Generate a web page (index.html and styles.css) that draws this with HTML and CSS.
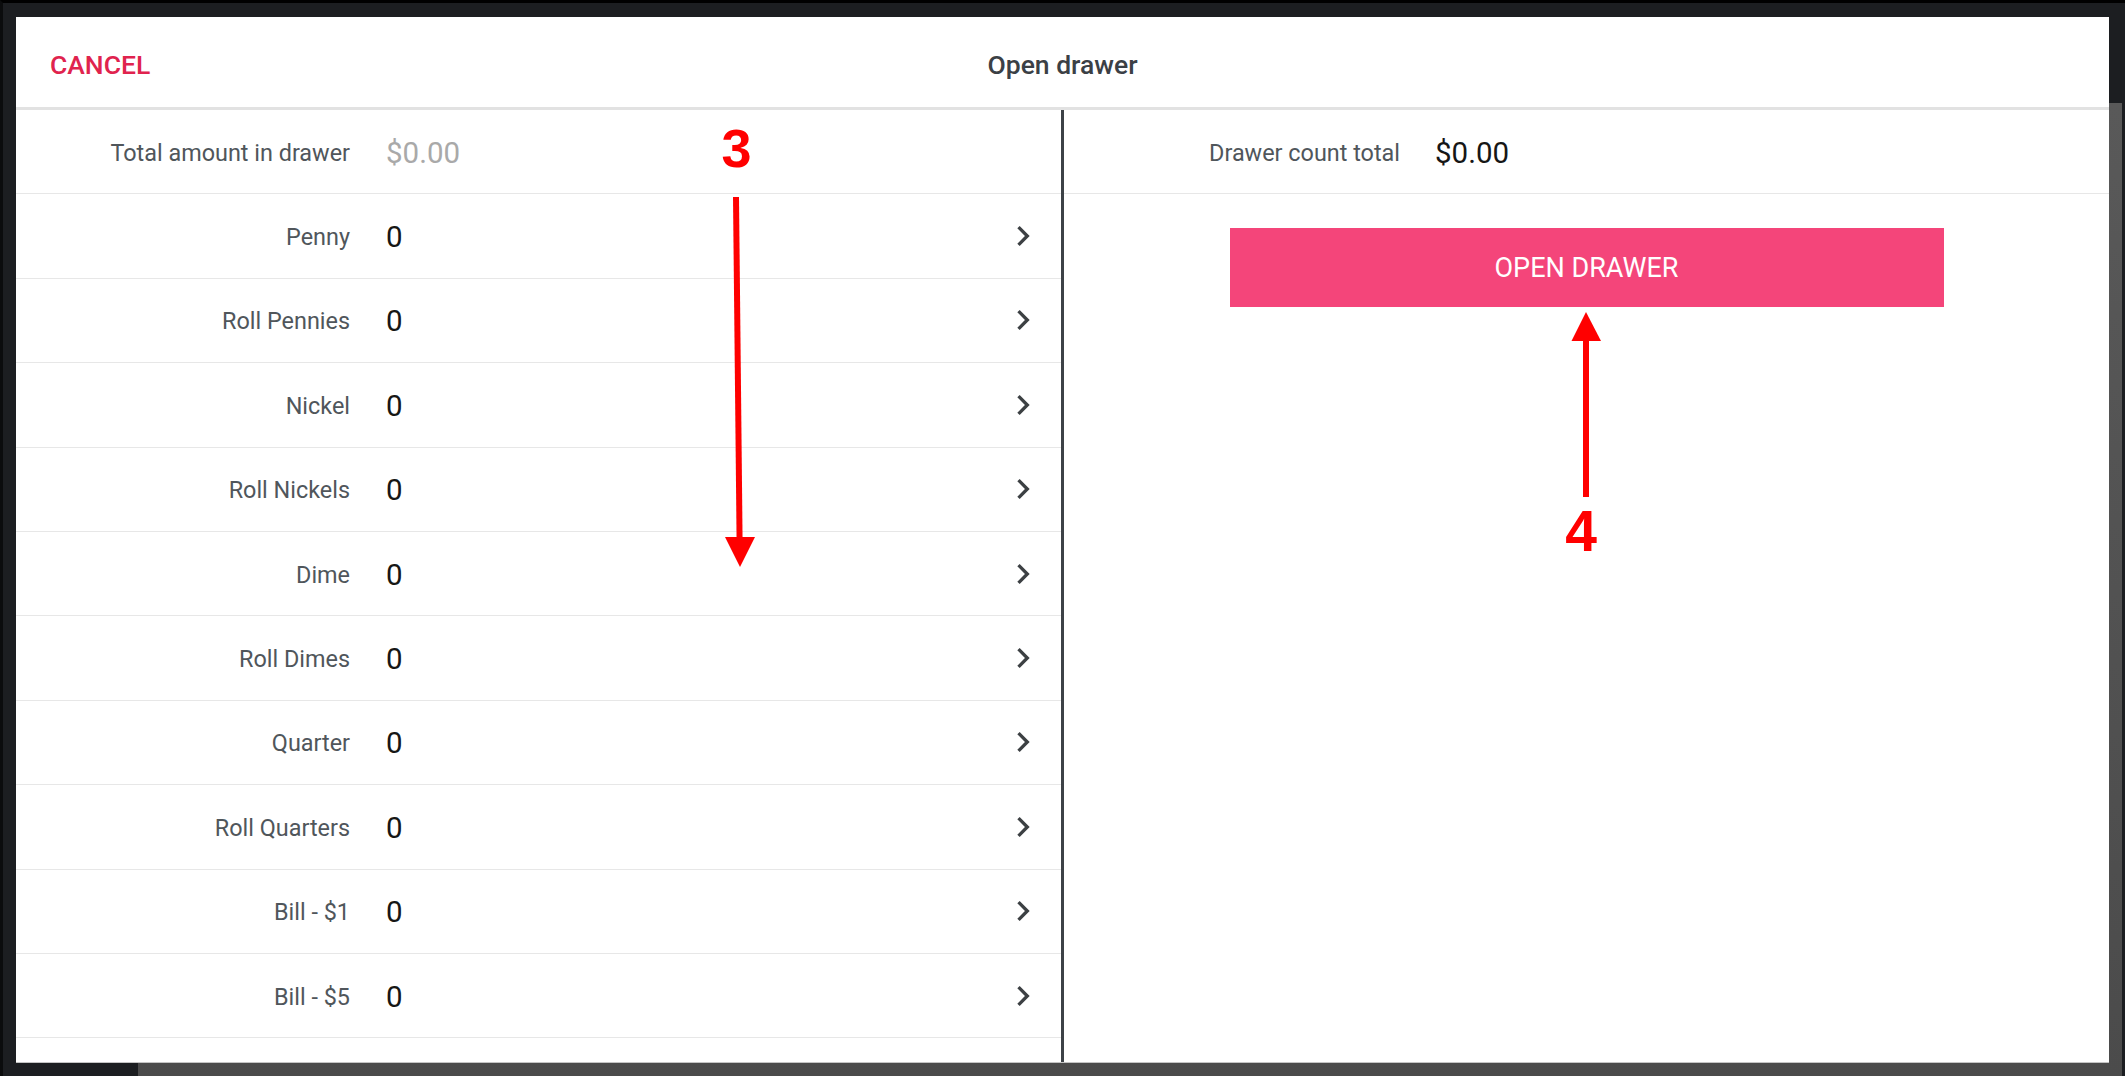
FILE: index.html
```html
<!DOCTYPE html>
<html lang="en">
<head>
<meta charset="utf-8">
<title>Open drawer</title>
<link rel="stylesheet" href="styles.css">
</head>
<body>
<div class="screen">
  <div class="modal">
    <header class="bar">
      <span class="cancel">CANCEL</span>
      <h1 class="title">Open drawer</h1>
      <span></span>
    </header>
    <div class="panes">
      <section class="pane pane-left">
        <div class="row"><span class="label">Total amount in drawer</span><span class="value muted">$0.00</span></div>
        <div class="row"><span class="label">Penny</span><span class="value">0</span><svg class="chev" viewBox="0 0 24 24"><path d="M10 6L8.59 7.41 13.17 12l-4.58 4.59L10 18l6-6z"/></svg></div>
        <div class="row"><span class="label">Roll Pennies</span><span class="value">0</span><svg class="chev" viewBox="0 0 24 24"><path d="M10 6L8.59 7.41 13.17 12l-4.58 4.59L10 18l6-6z"/></svg></div>
        <div class="row"><span class="label">Nickel</span><span class="value">0</span><svg class="chev" viewBox="0 0 24 24"><path d="M10 6L8.59 7.41 13.17 12l-4.58 4.59L10 18l6-6z"/></svg></div>
        <div class="row"><span class="label">Roll Nickels</span><span class="value">0</span><svg class="chev" viewBox="0 0 24 24"><path d="M10 6L8.59 7.41 13.17 12l-4.58 4.59L10 18l6-6z"/></svg></div>
        <div class="row"><span class="label">Dime</span><span class="value">0</span><svg class="chev" viewBox="0 0 24 24"><path d="M10 6L8.59 7.41 13.17 12l-4.58 4.59L10 18l6-6z"/></svg></div>
        <div class="row"><span class="label">Roll Dimes</span><span class="value">0</span><svg class="chev" viewBox="0 0 24 24"><path d="M10 6L8.59 7.41 13.17 12l-4.58 4.59L10 18l6-6z"/></svg></div>
        <div class="row"><span class="label">Quarter</span><span class="value">0</span><svg class="chev" viewBox="0 0 24 24"><path d="M10 6L8.59 7.41 13.17 12l-4.58 4.59L10 18l6-6z"/></svg></div>
        <div class="row"><span class="label">Roll Quarters</span><span class="value">0</span><svg class="chev" viewBox="0 0 24 24"><path d="M10 6L8.59 7.41 13.17 12l-4.58 4.59L10 18l6-6z"/></svg></div>
        <div class="row"><span class="label">Bill - $1</span><span class="value">0</span><svg class="chev" viewBox="0 0 24 24"><path d="M10 6L8.59 7.41 13.17 12l-4.58 4.59L10 18l6-6z"/></svg></div>
        <div class="row"><span class="label">Bill - $5</span><span class="value">0</span><svg class="chev" viewBox="0 0 24 24"><path d="M10 6L8.59 7.41 13.17 12l-4.58 4.59L10 18l6-6z"/></svg></div>
        <div class="row"></div>
      </section>
      <section class="pane pane-right">
        <div class="row"><span class="label label-wide">Drawer count total</span><span class="value value-right">$0.00</span></div>
        <div class="actions"><button class="open" type="button">OPEN DRAWER</button></div>
      </section>
    </div>
  </div>
</div>
<svg class="notes" width="2125" height="1076" viewBox="0 0 2125 1076">
  <text class="num" x="736.5" y="167">3</text>
  <line class="shaft" x1="736" y1="197" x2="739.6" y2="542"/>
  <polygon class="head" points="725,537 755,537 740,567"/>
  <line class="shaft" x1="1586" y1="497" x2="1586" y2="336"/>
  <polygon class="head" points="1571.5,341 1601,341 1586,312"/>
  <text class="num num-four" x="1581" y="551">4</text>
</svg>
</body>
</html>
```
FILE: styles.css
```css
html, body {
  margin: 0;
  height: 100%;
}

body {
  position: relative;
  background: #1c1e21;
  font-family: Roboto, "Liberation Sans", Arial, sans-serif;
  overflow: hidden;
}

.screen {
  width: 2125px;
  height: 1076px;
  box-sizing: border-box;
  border-top: 3px solid #000;
  border-left: 3px solid #0b0c0d;
  padding: 14px 16px 14px 13px;
  background:
    linear-gradient(#595959, #4b4b4b) 135px 100px / 1984px 976px no-repeat,
    #1c1e21;
}

.modal {
  height: 100%;
  background: #fff;
  display: flex;
  flex-direction: column;
  box-shadow: 0 1px 0 #c4c4c4;
}

.bar {
  flex: none;
  height: 93px;
  box-sizing: border-box;
  border-bottom: 3px solid #e2e2e2;
  padding: 5px 34px 0;
  display: grid;
  grid-template-columns: 1fr auto 1fr;
  align-items: center;
}

.cancel {
  color: #e0234e;
  font-size: 26.5px;
  font-weight: 500;
}

.title {
  margin: 0;
  font-size: 26.5px;
  font-weight: 500;
  color: #3b4045;
}

.panes {
  flex: 1;
  min-height: 0;
  display: grid;
  grid-template-columns: 1048px 1fr;
  overflow: hidden;
}

.pane {
  min-height: 0;
  overflow: hidden;
}

.pane-left {
  border-right: 3px solid #3d4247;
}

.row {
  display: flex;
  align-items: center;
  height: 84.4px;
  box-sizing: border-box;
  padding-top: 2px;
  border-bottom: 1px solid #e7e7e7;
}

.label {
  flex: none;
  width: 334px;
  text-align: right;
  font-size: 23.4px;
  color: #50565b;
}

.label-wide {
  width: 336px;
}

.value {
  flex: 1;
  margin-left: 36px;
  font-size: 29.5px;
  color: #161616;
}

.value-right {
  margin-left: 35px;
}

.value.muted {
  color: #a9a9a9;
}

.chev {
  flex: none;
  width: 40px;
  height: 40px;
  margin-right: 18px;
  margin-top: -2px;
  fill: #3c4043;
}

.actions {
  display: flex;
  justify-content: center;
  padding-top: 34px;
}

.open {
  width: 714px;
  height: 79px;
  padding: 0;
  border: 0;
  background: #f4457a;
  color: #fff;
  font-family: Roboto, "Liberation Sans", Arial, sans-serif;
  font-size: 27px;
  font-weight: 400;
}

.notes {
  position: absolute;
  top: 0;
  left: 0;
  pointer-events: none;
}

.num {
  font-family: "Liberation Sans", Arial, sans-serif;
  font-weight: 700;
  font-size: 54px;
  fill: #ff0000;
  text-anchor: middle;
}

.num-four {
  font-size: 57px;
}

.shaft {
  stroke: #ff0000;
  stroke-width: 6;
}

.head {
  fill: #ff0000;
}
```
